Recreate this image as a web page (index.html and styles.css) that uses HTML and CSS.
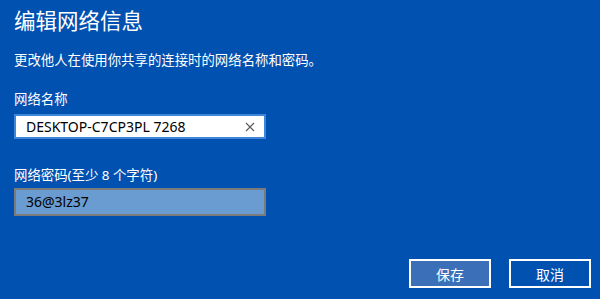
FILE: index.html
```html
<!DOCTYPE html>
<html lang="zh-CN">
<head>
<meta charset="utf-8">
<link rel="stylesheet" href="styles.css">
</head>
<body>
<div class="dialog">
  <h1 class="title">编辑网络信息</h1>
  <p class="desc">更改他人在使用你共享的连接时的网络名称和密码。</p>
  <label class="label label-name">网络名称</label>
  <div class="field field-name">
    <span class="value">DESKTOP-C7CP3PL 7268</span>
    <svg class="clear" width="10" height="10" viewBox="0 0 10 10"><path d="M1 1 L9 9 M9 1 L1 9" stroke="#5a5a5a" stroke-width="1.1" fill="none"/></svg>
  </div>
  <label class="label label-pass">网络密码(至少 8 个字符)</label>
  <div class="field field-pass">
    <span class="value">36@3lz37</span>
  </div>
  <div class="actions">
    <button class="btn btn-save">保存</button>
    <button class="btn btn-cancel">取消</button>
  </div>
</div>
</body>
</html>
```
FILE: styles.css
```css
html, body {
  margin: 0;
  padding: 0;
  background: #0151b1;
  width: 600px;
  height: 299px;
  overflow: hidden;
}
.dialog {
  display: flex;
  flex-direction: column;
  padding: 5px 9px 0 14px;
  font-family: "Noto Sans", "Noto Sans CJK SC", sans-serif;
  color: #ffffff;
}
.title {
  margin: 0;
  font-family: "Noto Sans CJK SC", sans-serif;
  font-weight: 400;
  font-size: 21.5px;
  line-height: 30px;
  height: 30px;
}
.desc {
  margin: 15px 0 0 0;
  font-size: 13.4px;
  line-height: 20px;
  height: 20px;
}
.label {
  display: block;
  font-size: 13.4px;
  line-height: 20px;
  height: 20px;
}
.label-name { margin-top: 19px; }
.label-pass { margin-top: 26px; }
.field {
  box-sizing: border-box;
  width: 252px;
  border: 2px solid;
  display: flex;
  align-items: center;
  padding: 0 0 0 10px;
  font-size: 14px;
  color: #000;
}
.field-name {
  margin-top: 5px;
  height: 25px;
  background: #ffffff;
  border-color: #3f86d8;
  justify-content: space-between;
  padding-right: 9px;
}
.field-pass {
  margin-top: 3px;
  height: 28px;
  background: #6a9bd1;
  border-color: #7b7b7b;
}
.value {
  line-height: 20px;
}
.clear {
  display: block;
}
.actions {
  display: flex;
  justify-content: flex-end;
  gap: 18px;
  margin-top: 43px;
}
.btn {
  box-sizing: border-box;
  width: 82px;
  height: 29px;
  border: 2px solid #ffffff;
  color: #ffffff;
  font-family: "Noto Sans CJK SC", sans-serif;
  font-size: 14px;
  padding: 0;
  margin: 0;
}
.btn-save { background: #3b6fb7; }
.btn-cancel { background: #0151b1; }
```
